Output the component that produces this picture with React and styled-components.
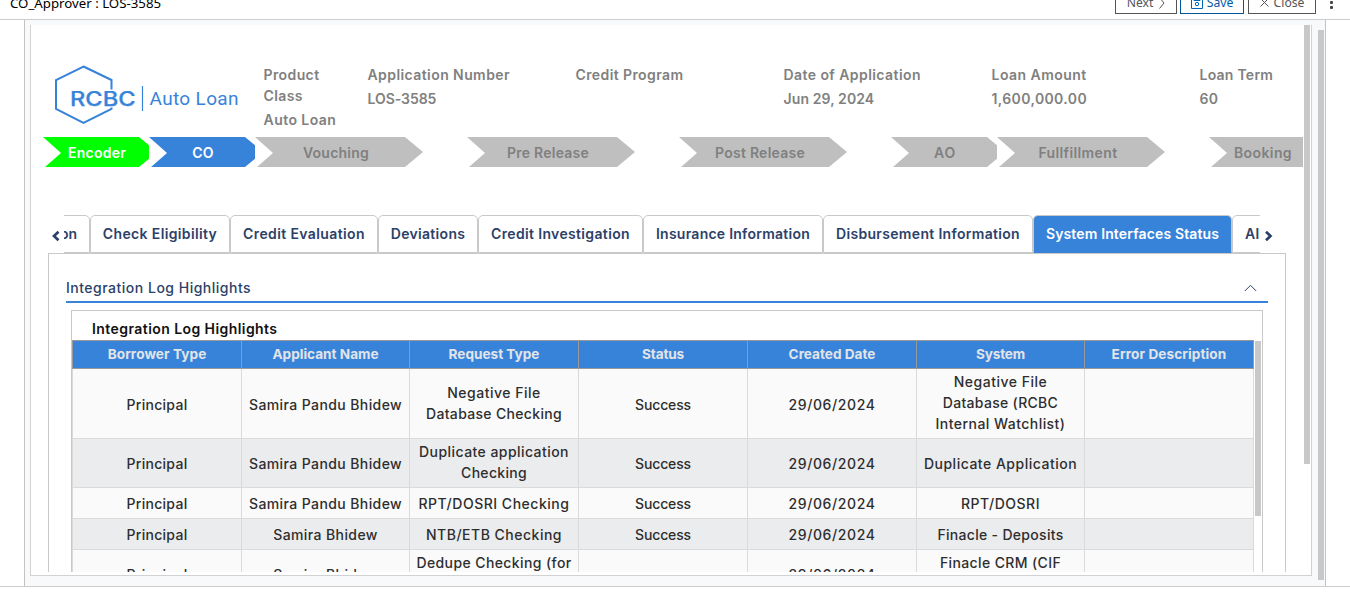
import React from 'react';
import styled, { createGlobalStyle, css } from 'styled-components';

const BLUE = '#3783da';
const NAVY = '#2c4168';

const GlobalStyle = createGlobalStyle`
  * { box-sizing: border-box; }
  body {
    margin: 0;
    background: #fff;
    overflow: hidden;
    font: 500 14px/21px Inter, "Liberation Sans", sans-serif;
  }
`;

const Page = styled.div`
  height: 602px;
  display: flex;
  flex-direction: column;
  overflow: hidden;
`;

const TopBar = styled.header`
  height: 20px;
  flex: none;
  display: flex;
  align-items: flex-end;
  overflow: hidden;
  padding-left: 10px;
  border-bottom: 1px solid #ccc;
`;

const AppTitle = styled.h1`
  margin: 0 auto 0 0;
  padding-bottom: 7px;
  font: 400 13.25px/18px "Noto Sans", sans-serif;
  color: #000;
`;

const Actions = styled.div`
  display: flex;
  gap: 4px;
  padding-bottom: 5px;
`;

const ActionButton = styled.button`
  width: ${p => p.$w}px;
  height: 26px;
  padding: 3px 0 0;
  margin-left: ${p => p.$ml || 0}px;
  display: flex;
  align-items: center;
  justify-content: center;
  gap: ${p => p.$gap}px;
  background: #fff;
  border: 1px solid ${p => (p.$primary ? '#00579c' : '#555')};
  color: ${p => (p.$primary ? '#005ba6' : '#555')};
  font: 400 12.2px/18px "Noto Sans", sans-serif;
`;

const MoreIcon = styled.svg`
  margin: 0 16px 9px 13px;
  flex: none;
`;

const Stage = styled.div`
  height: 567px;
  flex: none;
  padding: 0 24px;
  border-bottom: 1px solid #ccc;
`;

const Frame = styled.div`
  height: 566px;
  display: flex;
  padding: 5px 1px 0 5px;
  background: #f8f9fb;
  border: solid #c3c3c3;
  border-width: 0 1px;
`;

const Sheet = styled.div`
  width: 1282px;
  height: 551px;
  display: flex;
  padding-bottom: 3px;
  background: #fff;
  border: solid #d0d2d4;
  border-width: 0 1px 1px;
`;

const Content = styled.main`
  width: 1273px;
  flex: none;
  overflow: hidden;
`;

const Scrollbar = styled.div`
  width: 6px;
  flex: none;
  height: ${p => p.$h}px;
  margin: ${p => p.$mt || 0}px 0 0 ${p => p.$ml || 0}px;
  background: #c8c8c8;
`;

const Summary = styled.section`
  height: 112px;
  display: flex;
  padding: 35px 0 0 19px;
  color: #808080;
`;

const Logo = styled.svg`
  width: 213px;
  height: 70px;
  flex: none;
`;

const Fields = styled.dl`
  margin: 4px 0 0 0.5px;
  display: flex;
`;

const Field = styled.div`
  width: ${p => p.$w}px;
  padding-right: ${p => (p.$w > 104 ? 0 : 28)}px;
  flex: none;
`;

const spacing = css`
  letter-spacing: ${p => p.$ls || 0}px;
`;

const FieldName = styled.dt`
  font-weight: 600;
  ${spacing}
`;

const FieldValue = styled.dd`
  margin: 3px 0 0;
  white-space: nowrap;
  font-weight: 600;
  ${spacing}
`;

const Steps = styled.ol`
  margin: 0;
  padding: 0 0 0 12px;
  display: flex;
  list-style: none;
`;

const Step = styled.li`
  width: ${p => p.$col}px;
  flex: none;
  overflow: hidden;
`;

const StepShape = styled.div`
  width: ${p => (p.$wide ? 168 : 114)}px;
  height: 30px;
  padding: 0 6px 0 0;
  display: flex;
  align-items: center;
  justify-content: center;
  font-weight: 600;
  background: ${p => p.$bg || '#bfbfbf'};
  color: ${p => (p.$bg ? '#fff' : '#808080')};
  clip-path: polygon(0 0, calc(100% - 18px) 0, 100% 15px, calc(100% - 18px) 100%, 2px 100%, 18px 16px);
  ${spacing}
`;

const TabRow = styled.nav`
  height: 38px;
  margin: 48px 0 0 17px;
  display: flex;
  align-items: center;
`;

const Arrow = styled.svg`
  width: 10px;
  height: 12px;
  flex: none;
  margin: 3px 3px 0;
`;

const TabStrip = styled.div`
  width: 1196px;
  height: 38px;
  display: flex;
  overflow: hidden;
`;

const Tab = styled.div`
  width: ${p => p.$w}px;
  height: 38px;
  flex: none;
  display: flex;
  align-items: center;
  justify-content: ${p => p.$align || 'center'};
  margin-left: ${p => p.$ml || 0}px;
  padding: 0 12px 2px;
  white-space: nowrap;
  border: 1px solid #c9c9c9;
  border-radius: 5px 5px 0 0;
  border-bottom-color: ${p => (p.$active ? BLUE : '#c9c9c9')};
  background: ${p => (p.$active ? BLUE : '#fff')};
  color: ${p => (p.$active ? '#fff' : NAVY)};
  font-weight: 600;
  ${spacing}
`;

const Panel = styled.section`
  width: 1238px;
  height: 400px;
  margin-left: 17px;
  padding: 23px 17px 0;
  border: 1px solid #c9c9c9;
`;

const PanelHead = styled.div`
  height: 26px;
  display: flex;
  justify-content: space-between;
  border-bottom: 2px solid ${BLUE};
  color: ${NAVY};
  ${spacing}
`;

const Chevron = styled.svg`
  width: 13px;
  height: 8px;
  margin: 7px 11px 0 0;
`;

const LogBox = styled.div`
  width: 1192px;
  height: 340px;
  margin: 7px 0 0 5px;
  border: 1px solid #c9c9c9;
`;

const LogTitle = styled.h2`
  height: 29px;
  margin: 0;
  padding: 7px 0 0 20px;
  font-size: 14px;
  line-height: 21px;
  font-weight: 600;
  color: #111;
  ${spacing}
`;

const LogBody = styled.div`
  display: flex;
  align-items: flex-start;
`;

const Row = styled.div`
  display: grid;
  grid-template-columns: 169px 168px 169px 169px 169px 168px 169px;
  height: ${p => p.$h}px;
  border-left: 1px solid #dadada;
  background: ${p => (p.$even ? '#ebecee' : '#fafafa')};
`;

const HeadRow = styled(Row)`
  height: 29px;
  background: ${BLUE};
  border-top: 1px solid #999;
  border-left-color: #999;
`;

const HeadCell = styled.div`
  display: flex;
  align-items: center;
  justify-content: center;
  border: solid #999;
  border-width: 0 1px 1px 0;
  color: #e2e4e8;
  font-weight: 700;
  font-size: 13.6px;
  ${spacing}
`;

const Cell = styled.div`
  display: flex;
  flex-direction: column;
  align-items: center;
  justify-content: center;
  padding: ${p => (p.$lines > 1 ? '0 0 2px' : '1px 0 0')};
  border: solid #dadada;
  border-width: 0 1px 1px 0;
  white-space: nowrap;
  color: #2e2e2e;
`;

const Line = styled.span`
  ${spacing}
`;

const fields = [
  { w: 104, name: 'Product Class', ls: 0.4, value: 'Auto Loan', vls: 0.45 },
  { w: 208, name: 'Application Number', ls: 0.42, value: 'LOS-3585', vls: -0.05 },
  { w: 208, name: 'Credit Program', ls: 0.4 },
  { w: 208, name: 'Date of Application', ls: 0.43, value: 'Jun 29, 2024', vls: 0.1 },
  { w: 208, name: 'Loan Amount', ls: 0.47, value: '1,600,000.00', vls: 0.38 },
  { w: 105, name: 'Loan Term', ls: 0.25, value: '60', vls: 0.4 },
];

const steps = [
  { label: 'Encoder', col: 106, bg: '#00ff00', ls: 0.25 },
  { label: 'CO', col: 106, bg: BLUE, ls: 0.2 },
  { label: 'Vouching', col: 212, wide: true, ls: 0.22 },
  { label: 'Pre Release', col: 212, wide: true, ls: 0.24 },
  { label: 'Post Release', col: 212, wide: true, ls: 0.26 },
  { label: 'AO', col: 106, ls: 0.8 },
  { label: 'Fullfillment', col: 212, wide: true, ls: 0.37 },
  { label: 'Booking', col: 94, ls: 0.4 },
];

const tabs = [
  { label: 'on', w: 60, ml: -34, ls: 0, align: 'flex-end' },
  { label: 'Check Eligibility', w: 140, ls: 0.36 },
  { label: 'Credit Evaluation', w: 148, ls: 0.38 },
  { label: 'Deviations', w: 100, ls: 0.31 },
  { label: 'Credit Investigation', w: 165, ls: 0.35 },
  { label: 'Insurance Information', w: 180, ls: 0.25 },
  { label: 'Disbursement Information', w: 210, ls: 0.32 },
  { label: 'System Interfaces Status', w: 199, ls: 0.14, active: true },
  { label: 'Al', w: 60, ls: 0.3, align: 'flex-start' },
];

const columns = [
  ['Borrower Type', 0.08],
  ['Applicant Name', 0],
  ['Request Type', 0],
  ['Status', -0.15],
  ['Created Date', 0],
  ['System', -0.15],
  ['Error Description', 0.1],
];

const principal = [['Principal', 0.29]];
const samiraPandu = [['Samira Pandu Bhidew', 0.4]];
const samira = [['Samira Bhidew', 0.4]];
const success = [['Success', -0.14]];
const created = [['29/06/2024', 0.6]];

const rows = [
  {
    h: 70,
    cells: [
      principal, samiraPandu,
      [['Negative File', 0.5], ['Database Checking', 0.32]],
      success, created,
      [['Negative File', 0.5], ['Database (RCBC', 0.3], ['Internal Watchlist)', 0.46]],
      [],
    ],
  },
  {
    h: 49,
    cells: [
      principal, samiraPandu,
      [['Duplicate application', 0.44], ['Checking', 0.3]],
      success, created, [['Duplicate Application', 0.5]], [],
    ],
  },
  { h: 31, cells: [principal, samiraPandu, [['RPT/DOSRI Checking', 0.52]], success, created, [['RPT/DOSRI', 0.5]], []] },
  { h: 31, cells: [principal, samira, [['NTB/ETB Checking', 0.5]], success, created, [['Finacle - Deposits', 0.3]], []] },
  {
    h: 49,
    cells: [
      principal, samira,
      [['Dedupe Checking (for', 0.4], ['CIF)', 0.3]],
      [], created,
      [['Finacle CRM (CIF', 0.38], ['Dedupe)', 0.3]],
      [],
    ],
  },
];

function BrandLogo() {
  return (
    <Logo viewBox="50 60 213 70">
      <path d="M83.500 66.500 L111.500 80 V109 L83.500 122.800 L56 109 V80 Z" fill="none" stroke={BLUE} strokeWidth="2" />
      <rect x="68" y="89.500" width="68" height="18" fill="#fff" />
      <text x="70" y="105.500" fill={BLUE} stroke={BLUE} strokeWidth="0.25" fontFamily="Inter" fontWeight="500" fontSize="19.500"
        textLength="65.500" lengthAdjust="spacingAndGlyphs">RCBC</text>
      <path d="M142.500 86 V111" stroke={BLUE} strokeWidth="1.200" />
      <text x="149.500" y="105" fill={BLUE} fontFamily="Roboto" fontWeight="400" fontSize="19"
        textLength="89" lengthAdjust="spacing">Auto Loan</text>
    </Logo>
  );
}

export default function App() {
  return (
    <Page>
      <GlobalStyle />
      <TopBar>
        <AppTitle>CO_Approver : LOS-3585</AppTitle>
        <Actions>
          <ActionButton $w={62} $gap={6}>
            Next
            <svg width="6" height="12" viewBox="0 0 6 12" fill="none" stroke="#555"><path d="M.5 .5 5 6 .5 11.500" /></svg>
          </ActionButton>
          <ActionButton $w={64} $gap={4} $primary $ml={-1}>
            <svg width="12" height="12" viewBox="0 0 12 12" fill="none" stroke="#0065b8">
              <path d="M.5 .5h11v11H.5z M3 .5v3h6v-3" /><circle cx="6" cy="7" r="1.700" />
            </svg>
            Save
          </ActionButton>
          <ActionButton $w={68} $gap={5}>
            <svg width="9" height="9" viewBox="0 0 9 9" fill="none" stroke="#555"><path d="M.5 .5l8 8M8.500 .5l-8 8" /></svg>
            Close
          </ActionButton>
        </Actions>
        <MoreIcon width="5" height="13" viewBox="0 0 5 13" fill="#444">
          <rect x="1" y="0" width="3" height="3" rx="1" /><rect x="1" y="4" width="3" height="3" rx="1" /><rect x="1" y="9" width="3" height="3" rx="1" />
        </MoreIcon>
      </TopBar>
      <Stage>
        <Frame>
          <Sheet>
            <Content>
              <Summary>
                <BrandLogo />
                <Fields>
                  {fields.map(f => (
                    <Field key={f.name} $w={f.w}>
                      <FieldName $ls={f.ls}>{f.name}</FieldName>
                      {f.value && <FieldValue $ls={f.vls}>{f.value}</FieldValue>}
                    </Field>
                  ))}
                </Fields>
              </Summary>
              <Steps>
                {steps.map(s => (
                  <Step key={s.label} $col={s.col}>
                    <StepShape $wide={s.wide} $bg={s.bg} $ls={s.ls}>{s.label}</StepShape>
                  </Step>
                ))}
              </Steps>
              <TabRow>
                <Arrow viewBox="-1 -1 10 12"><path d="M6.500 .8 2 5 6.500 9.200" fill="none" stroke={NAVY} strokeWidth="2.700" /></Arrow>
                <TabStrip>
                  {tabs.map(t => (
                    <Tab key={t.label} $w={t.w} $ml={t.ml} $ls={t.ls} $active={t.active} $align={t.align}>{t.label}</Tab>
                  ))}
                </TabStrip>
                <Arrow viewBox="-1 -1 10 12"><path d="M2 .8 6.500 5 2 9.200" fill="none" stroke={NAVY} strokeWidth="2.700" /></Arrow>
              </TabRow>
              <Panel>
                <PanelHead $ls={0.5}>
                  Integration Log Highlights
                  <Chevron viewBox="0 0 13 8"><path d="M.8 7 6.500 1.300 12.200 7" fill="none" stroke={NAVY} strokeWidth="1" /></Chevron>
                </PanelHead>
                <LogBox>
                  <LogTitle $ls={0.43}>Integration Log Highlights</LogTitle>
                  <LogBody>
                    <div>
                      <HeadRow>
                        {columns.map(([label, ls]) => <HeadCell key={label} $ls={ls}>{label}</HeadCell>)}
                      </HeadRow>
                      {rows.map((row, i) => (
                        <Row key={i} $h={row.h} $even={i % 2 === 1}>
                          {row.cells.map((lines, j) => (
                            <Cell key={j} $lines={lines.length}>
                              {lines.map(([text, ls]) => <Line key={text} $ls={ls}>{text}</Line>)}
                            </Cell>
                          ))}
                        </Row>
                      ))}
                    </div>
                    <Scrollbar $h={175} $mt={1} $ml={1} />
                  </LogBody>
                </LogBox>
              </Panel>
            </Content>
            <Scrollbar $h={439} />
          </Sheet>
          <Scrollbar $h={550} $mt={5} $ml={6} />
        </Frame>
      </Stage>
    </Page>
  );
}
